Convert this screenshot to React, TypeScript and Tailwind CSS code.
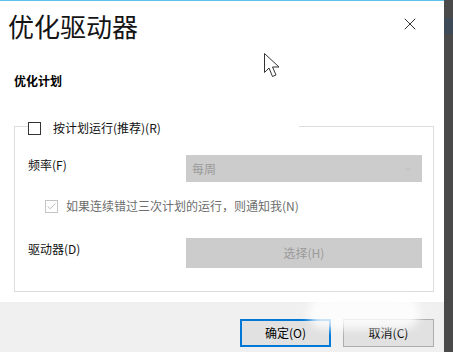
import { Check, ChevronDown, X } from 'lucide-react';

const font = { fontFamily: '"Noto Sans CJK SC", "Noto Sans", sans-serif' };

const App = () => {
  return (
    <div className="flex w-[453px] h-[352px] overflow-hidden bg-white" style={font}>
      <div className="relative flex flex-col w-[444px] h-full border-t border-[#5bc2ec]">
        {/* header */}
        <div className="flex justify-between mt-[11px] pl-[8px] pr-[24px]">
          <h1 className="text-[26px] leading-[28px] text-[#141414]">优化驱动器</h1>
          <X className="mt-[2px] w-[20px] h-[20px] text-[#1e1e1e]" strokeWidth={1.1} />
        </div>

        <div className="mt-[33px] pl-[14px] text-[12px] leading-[16px] font-bold text-black">优化计划</div>

        {/* group box */}
        <div className="mt-[37px] ml-[14px] w-[420px] h-[166px] border border-[#dcdcdc]">
          <div className="flex items-center -mt-[6px] ml-[13px] w-[271px] h-[14px] bg-white">
            <div className="w-[13px] h-[13px] border border-[#333] bg-white" />
            <span className="ml-[12px] text-[12px] text-[#111]">按计划运行(推荐)(R)</span>
          </div>

          <div className="flex items-start mt-[20px] pl-[13px]">
            <span className="w-[158px] pt-[2px] text-[12px] leading-[16px] text-[#111]">频率(F)</span>
            <div className="flex items-center justify-between w-[236px] h-[27px] pl-[6px] pr-[8px] bg-[#cccccc]">
              <span className="text-[12px] text-[#9a9a9a]">每周</span>
              <ChevronDown className="w-[12px] h-[12px] text-[#b0b0b0]" strokeWidth={1.2} />
            </div>
          </div>

          <div className="flex items-center mt-[16px] pl-[30px]">
            <div className="flex items-center justify-center w-[13px] h-[13px] border border-[#c4c4c4] bg-white">
              <Check className="w-[11px] h-[11px] text-[#b4b4b4]" strokeWidth={2} />
            </div>
            <span className="ml-[8px] text-[12px] leading-[16px] text-[#6d6d6d]">如果连续错过三次计划的运行，则通知我(N)</span>
          </div>

          <div className="flex items-start mt-[24px] pl-[13px]">
            <span className="w-[158px] pt-[3px] text-[12px] leading-[16px] text-[#111]">驱动器(D)</span>
            <div className="flex items-center justify-center w-[236px] h-[30px] bg-[#cccccc] text-[12px] text-[#9a9a9a]">
              选择(H)
            </div>
          </div>
        </div>

        {/* footer */}
        <div className="flex justify-end gap-[12px] mt-[10px] flex-1 pt-[17px] pr-[10px] bg-[#f0f0f0]">
          <button className="w-[91px] h-[28px] border-2 border-[#0078d7] bg-[#e1e1e1] text-[12px] text-black">确定(O)</button>
          <button className="w-[91px] h-[28px] border border-[#adadad] bg-[#e1e1e1] text-[12px] text-black">取消(C)</button>
        </div>

        {/* watermark blur */}
        <div className="absolute left-[308px] top-[296px] w-[112px] h-[32px] rounded-full bg-white/80 blur-[4px]" />

        {/* mouse cursor */}
        <svg className="absolute left-[263px] top-[51px]" width="19" height="28" viewBox="0 0 19 28">
          <path
            d="M1.5 1.5 L1.5 20.5 L6 16 L9.5 24.5 L13 23 L9.5 15 L16 15 Z"
            fill="#fff"
            stroke="#333"
            strokeWidth="1"
            strokeLinejoin="round"
          />
        </svg>
      </div>
      <div className="flex flex-col w-[9px] h-full bg-[#4a4a4a]">
        <div className="mt-[18px] h-[16px] bg-[#3f4a58]" />
      </div>
    </div>
  );
};

export default App;
